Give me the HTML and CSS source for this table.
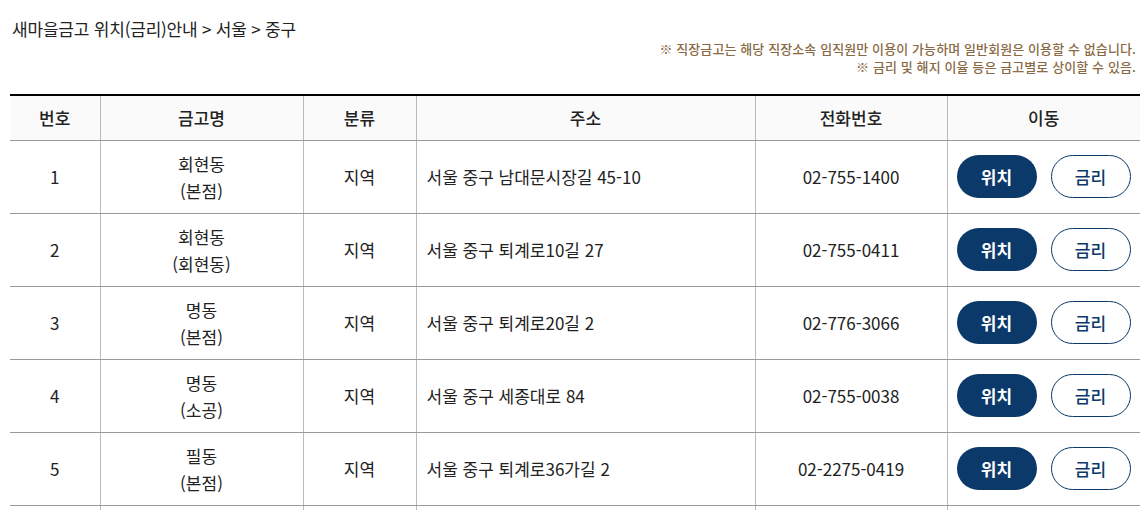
FILE: index.html
```html
<!DOCTYPE html>
<html lang="ko">
<head>
<meta charset="utf-8">
<link rel="stylesheet" href="styles.css">
</head>
<body>
<div class="page">
  <div class="top">
    <h1 class="title">새마을금고 위치(금리)안내 &gt; 서울 &gt; 중구</h1>
    <div class="notice">
      <p>※ 직장금고는 해당 직장소속 임직원만 이용이 가능하며 일반회원은 이용할 수 없습니다.</p>
      <p>※ 금리 및 해지 이율 등은 금고별로 상이할 수 있음.</p>
    </div>
  </div>
  <table class="list">
    <colgroup>
      <col class="c1"><col class="c2"><col class="c3"><col class="c4"><col class="c5"><col class="c6">
    </colgroup>
    <thead>
      <tr><th>번호</th><th>금고명</th><th>분류</th><th>주소</th><th>전화번호</th><th>이동</th></tr>
    </thead>
    <tbody>
      <tr><td>1</td><td>회현동<br>(본점)</td><td>지역</td><td class="addr">서울 중구 남대문시장길 45-10</td><td>02-755-1400</td><td><div class="btns"><a class="btn fill">위치</a><a class="btn line">금리</a></div></td></tr>
      <tr><td>2</td><td>회현동<br>(회현동)</td><td>지역</td><td class="addr">서울 중구 퇴계로10길 27</td><td>02-755-0411</td><td><div class="btns"><a class="btn fill">위치</a><a class="btn line">금리</a></div></td></tr>
      <tr><td>3</td><td>명동<br>(본점)</td><td>지역</td><td class="addr">서울 중구 퇴계로20길 2</td><td>02-776-3066</td><td><div class="btns"><a class="btn fill">위치</a><a class="btn line">금리</a></div></td></tr>
      <tr><td>4</td><td>명동<br>(소공)</td><td>지역</td><td class="addr">서울 중구 세종대로 84</td><td>02-755-0038</td><td><div class="btns"><a class="btn fill">위치</a><a class="btn line">금리</a></div></td></tr>
      <tr><td>5</td><td>필동<br>(본점)</td><td>지역</td><td class="addr">서울 중구 퇴계로36가길 2</td><td>02-2275-0419</td><td><div class="btns"><a class="btn fill">위치</a><a class="btn line">금리</a></div></td></tr>
      <tr class="next"><td></td><td></td><td></td><td></td><td></td><td></td></tr>
    </tbody>
  </table>
</div>
</body>
</html>
```

FILE: styles.css
```css
* { box-sizing: border-box; }
html, body { margin: 0; padding: 0; background: #fff; }
body {
  font-family: "Noto Sans CJK KR", "Noto Sans", sans-serif;
  color: #222;
  overflow: hidden;
}
.page { padding: 17px 0 0 10px; width: 1142px; }
.top { display: flex; flex-direction: column; }
.title {
  margin: 0 0 0 2px;
  font-size: 17px;
  font-weight: 400;
  line-height: 24px;
  letter-spacing: -0.2px;
  color: #222;
}
.notice {
  margin: -1px 6px 0 0;
  text-align: right;
  color: #8a6a45;
  font-size: 13px;
  font-weight: 500;
  line-height: 18px;
  letter-spacing: 0.1px;
}
.notice p { margin: 0; }
.list {
  margin-top: 18px;
  width: 1130px;
  border-collapse: collapse;
  table-layout: fixed;
  border-top: 2px solid #000;
  font-size: 17px;
}
.c1 { width: 90px; }
.c2 { width: 203px; }
.c3 { width: 113px; }
.c4 { width: 339px; }
.c5 { width: 192px; }
.c6 { width: 193px; }
.list th {
  height: 45px;
  background: #fafafa;
  font-weight: 500;
  border-bottom: 1px solid #999;
  border-left: 1px solid #bbb;
  padding: 0;
  color: #222;
}
.list td {
  height: 73px;
  text-align: center;
  border-bottom: 1px solid #999;
  border-left: 1px solid #bbb;
  padding: 0;
  line-height: 27px;
}
.list th:first-child, .list td:first-child { border-left: none; }
.list td.addr { text-align: left; padding-left: 10px; }
.btns { display: flex; gap: 14px; padding-left: 9px; }
.btn {
  width: 80px;
  height: 43px;
  border-radius: 22px;
  display: flex;
  align-items: center;
  justify-content: center;
  font-size: 17px;
  text-decoration: none;
}
.btn.fill { background: #0b3969; color: #fff; font-weight: 700; }
.btn.line { background: #fff; color: #0b3969; border: 1px solid #0b3969; font-weight: 500; }
```
